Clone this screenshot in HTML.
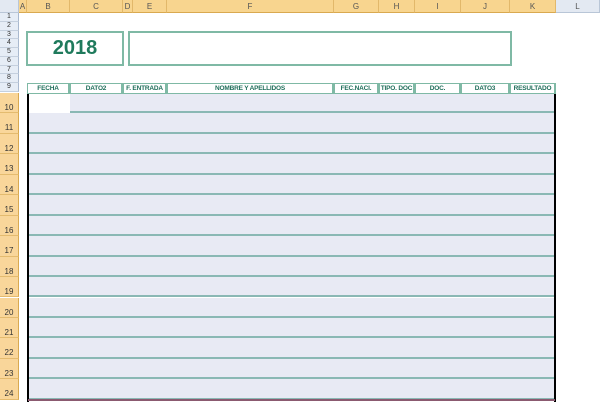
<!DOCTYPE html>
<html><head><meta charset="utf-8"><style>
*{margin:0;padding:0;box-sizing:border-box}
body{width:600px;height:402px;overflow:hidden;background:#fff;font-family:"Liberation Sans",sans-serif;position:relative}
.a{position:absolute}
.ch{top:0;height:13px;background:#f8d58f;border-right:1px solid #e2b86a;border-bottom:1px solid #d9a950;font-size:8px;color:#555;text-align:center;line-height:13px}
.rh{left:0;width:19px;background:#e6edf6;border-bottom:1px solid #c5d0de;border-right:1px solid #a9b9cf;font-size:7px;color:#333;text-align:center}
.rho{background:#f9d69a;border-bottom:1px solid #e4bb6f;border-right:1px solid #d9a950;font-size:8px}
.hd{top:83px;height:11px;border:1px solid #7fb9a5;border-right-width:2px;font-size:6.5px;font-weight:bold;color:#1f6e5a;text-align:center;line-height:9px;background:#fff;white-space:nowrap;overflow:hidden;letter-spacing:-0.2px}
</style></head><body>
<div class="a ch" style="left:0;width:19px;background:#e3e9f2;border-color:#b9c6d7"></div>
<div class="a ch" style="left:19px;width:8px">A</div>
<div class="a ch" style="left:27px;width:43px">B</div>
<div class="a ch" style="left:70px;width:53px">C</div>
<div class="a ch" style="left:123px;width:10px">D</div>
<div class="a ch" style="left:133px;width:34px">E</div>
<div class="a ch" style="left:167px;width:167px">F</div>
<div class="a ch" style="left:334px;width:45px">G</div>
<div class="a ch" style="left:379px;width:36px">H</div>
<div class="a ch" style="left:415px;width:46px">I</div>
<div class="a ch" style="left:461px;width:49px">J</div>
<div class="a ch" style="left:510px;width:46px">K</div>
<div class="a ch" style="left:556px;width:44px;background:#e3e9f2;border-color:#b9c6d7">L</div>

<div id="rows"></div>
<script>
var h='';
for(var i=1;i<=9;i++){var t=13+(i-1)*8.75;h+='<div class="a rh" style="top:'+t+'px;height:8.75px;line-height:8px">'+i+'</div>';}
for(var i=10;i<=24;i++){var t=93+(i-10)*20.45;h+='<div class="a rh rho" style="top:'+t+'px;height:20.45px;line-height:30px">'+i+'</div>';
h+='<div class="a" style="left:28px;width:527px;top:'+t+'px;height:20.45px;background:#e8eaf4;border-bottom:2px solid #8ab8b4"></div>';}
h+='<div class="a" style="left:28px;width:42px;top:94px;height:19px;background:#fff"></div>';
document.getElementById('rows').innerHTML=h;
</script>
<div class="a" style="left:27px;top:93px;width:2px;height:309px;background:#000"></div>
<div class="a" style="left:554px;top:93px;width:2px;height:309px;background:#000"></div>
<div class="a" style="left:28px;top:93px;width:527px;height:1px;background:#8b2040"></div>
<div class="a" style="left:28px;top:399px;width:527px;height:2px;background:#8b5a70"></div>

<div class="a" style="left:26px;top:31px;width:98px;height:35px;border:2px solid #7fb9a5;font-size:20px;font-weight:bold;color:#1f7a5c;text-align:center;line-height:31px">2018</div>
<div class="a" style="left:128px;top:31px;width:384px;height:35px;border:2px solid #7fb9a5"></div>

<div class="a hd" style="left:27px;width:43px">FECHA</div>
<div class="a hd" style="left:70px;width:53px">DATO2</div>
<div class="a hd" style="left:123px;width:44px">F. ENTRADA</div>
<div class="a hd" style="left:167px;width:167px">NOMBRE Y APELLIDOS</div>
<div class="a hd" style="left:334px;width:45px">FEC.NACI.</div>
<div class="a hd" style="left:379px;width:36px">TIPO. DOC</div>
<div class="a hd" style="left:415px;width:46px">DOC.</div>
<div class="a hd" style="left:461px;width:49px">DATO3</div>
<div class="a hd" style="left:510px;width:46px">RESULTADO</div>
</body></html>
